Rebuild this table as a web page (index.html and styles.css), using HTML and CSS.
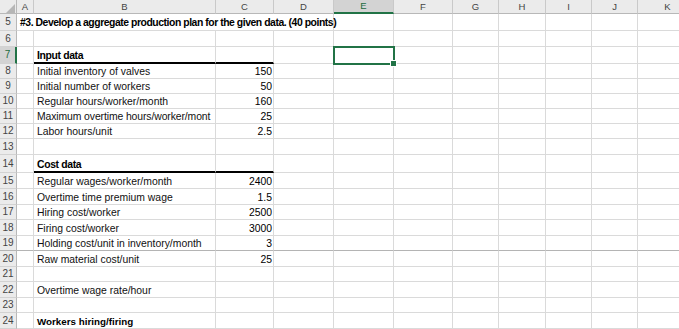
FILE: index.html
```html
<!DOCTYPE html>
<html>
<head>
<meta charset="utf-8">
<link rel="stylesheet" href="styles.css">
</head>
<body>
<table class="sheet">
<colgroup>
<col class="w-hdr"><col class="w-a"><col class="w-b"><col class="w-c"><col class="w-d"><col class="w-e"><col class="w-f"><col class="w-g"><col class="w-h"><col class="w-i"><col class="w-j"><col class="w-k">
</colgroup>
<tr class="colhdr">
<th class="corner"><svg class="tri" width="9" height="9" viewBox="0 0 9 9"><polygon points="9,0 9,9 0,9" fill="#b6b6b6"/></svg></th>
<th>A</th><th>B</th><th>C</th><th>D</th><th class="selhdr">E</th><th>F</th><th>G</th><th>H</th><th>I</th><th>J</th><th>K</th>
</tr>
<tr class="h17"><th class="rn">5</th><td colspan="4" class="title">#3. Develop a aggregate production plan for the given data. (40 points)</td><td></td><td></td><td></td><td></td><td></td><td></td><td></td></tr>
<tr class="h16"><th class="rn">6</th><td></td><td></td><td></td><td></td><td></td><td></td><td></td><td></td><td></td><td></td><td></td></tr>
<tr class="h17"><th class="rn selrow">7</th><td></td><td class="head thick">Input data</td><td class="thick"></td><td></td><td class="sel"></td><td></td><td></td><td></td><td></td><td></td><td></td></tr>
<tr class="h15"><th class="rn">8</th><td></td><td class="lbl">Initial inventory of valves</td><td class="n">150</td><td></td><td></td><td></td><td></td><td></td><td></td><td></td><td></td></tr>
<tr class="h15"><th class="rn">9</th><td></td><td class="lbl">Initial number of workers</td><td class="n">50</td><td></td><td></td><td></td><td></td><td></td><td></td><td></td><td></td></tr>
<tr class="h15"><th class="rn">10</th><td></td><td class="lbl">Regular hours/worker/month</td><td class="n">160</td><td></td><td></td><td></td><td></td><td></td><td></td><td></td><td></td></tr>
<tr class="h15"><th class="rn">11</th><td></td><td class="lbl tight">Maximum overtime hours/worker/mont</td><td class="n">25</td><td></td><td></td><td></td><td></td><td></td><td></td><td></td><td></td></tr>
<tr class="h15"><th class="rn">12</th><td></td><td class="lbl">Labor hours/unit</td><td class="n">2.5</td><td></td><td></td><td></td><td></td><td></td><td></td><td></td><td></td></tr>
<tr class="h16"><th class="rn">13</th><td></td><td></td><td></td><td></td><td></td><td></td><td></td><td></td><td></td><td></td><td></td></tr>
<tr class="h18"><th class="rn">14</th><td></td><td class="head thick">Cost data</td><td class="thick"></td><td></td><td></td><td></td><td></td><td></td><td></td><td></td><td></td></tr>
<tr class="h16"><th class="rn">15</th><td></td><td class="lbl">Regular wages/worker/month</td><td class="n">2400</td><td></td><td></td><td></td><td></td><td></td><td></td><td></td><td></td></tr>
<tr class="h16"><th class="rn">16</th><td></td><td class="lbl">Overtime time premium wage</td><td class="n">1.5</td><td></td><td></td><td></td><td></td><td></td><td></td><td></td><td></td></tr>
<tr class="h15"><th class="rn">17</th><td></td><td class="lbl">Hiring cost/worker</td><td class="n">2500</td><td></td><td></td><td></td><td></td><td></td><td></td><td></td><td></td></tr>
<tr class="h16"><th class="rn">18</th><td></td><td class="lbl">Firing cost/worker</td><td class="n">3000</td><td></td><td></td><td></td><td></td><td></td><td></td><td></td><td></td></tr>
<tr class="h15 brk"><th class="rn">19</th><td></td><td class="lbl">Holding cost/unit in inventory/month</td><td class="n">3</td><td></td><td></td><td></td><td></td><td></td><td></td><td></td><td></td></tr>
<tr class="h16"><th class="rn">20</th><td></td><td class="lbl">Raw material cost/unit</td><td class="n">25</td><td></td><td></td><td></td><td></td><td></td><td></td><td></td><td></td></tr>
<tr class="h15"><th class="rn">21</th><td></td><td></td><td></td><td></td><td></td><td></td><td></td><td></td><td></td><td></td><td></td></tr>
<tr class="h16"><th class="rn">22</th><td></td><td class="lbl">Overtime wage rate/hour</td><td></td><td></td><td></td><td></td><td></td><td></td><td></td><td></td><td></td></tr>
<tr class="h15"><th class="rn">23</th><td></td><td></td><td></td><td></td><td></td><td></td><td></td><td></td><td></td><td></td><td></td></tr>
<tr class="h16"><th class="rn">24</th><td></td><td class="head arial">Workers hiring/firing</td><td></td><td></td><td></td><td></td><td></td><td></td><td></td><td></td><td></td></tr>
</table>
</body>
</html>
```
FILE: styles.css
```css
html, body {
  margin: 0;
  padding: 0;
  background: #ffffff;
  overflow: hidden;
}
body {
  width: 679px;
  height: 329px;
  font-family: "Liberation Sans", Arial, sans-serif;
  font-size: 10.4px;
  color: #000;
}
.sheet {
  table-layout: fixed;
  border-collapse: separate;
  border-spacing: 0;
  width: 698px;
}
.w-hdr { width: 17px; }
.w-a { width: 17px; }
.w-b { width: 182px; }
.w-c { width: 58px; }
.w-d { width: 60px; }
.w-e { width: 60px; }
.w-f { width: 59px; }
.w-g { width: 46px; }
.w-h { width: 47px; }
.w-i { width: 46px; }
.w-j { width: 46px; }
.w-k { width: 60px; }

.sheet td, .sheet th {
  box-sizing: border-box;
  padding: 0 2px 0 3px;
  border-right: 1px solid #dadada;
  border-bottom: 1px solid #dadada;
  white-space: nowrap;
  overflow: hidden;
  vertical-align: bottom;
  line-height: 12px;
  font-weight: normal;
}
.colhdr { height: 14px; }
.h15 { height: 15px; }
.h16 { height: 16px; }
.h17 { height: 17px; }
.h18 { height: 18px; }

.sheet .colhdr th {
  background: #ebebeb;
  color: #444;
  font-size: 9.5px;
  text-align: center;
  vertical-align: middle;
  padding: 0;
  border-right: 1px solid #c9c9c9;
  border-bottom: 1px solid #b8b8b8;
  line-height: 12px;
}
.sheet .colhdr th.corner {
  border-right: 1px solid #b8b8b8;
}
.tri {
  display: block;
  margin: 3px 1px 0 auto;
}
.sheet .colhdr th.selhdr {
  background: #d3d3d3;
  color: #1e6b40;
  border-bottom: 2px solid #217346;
}
.sheet th.rn {
  background: #ebebeb;
  color: #444;
  font-size: 10px;
  text-align: center;
  vertical-align: middle;
  padding: 0;
  border-right: 1px solid #b8b8b8;
  border-bottom: 1px solid #d2d2d2;
}
.sheet th.rn.selrow {
  background: #d3d3d3;
  color: #1e6b40;
  border-right: 2px solid #217346;
}
.sheet .title {
  font-weight: bold;
  letter-spacing: -0.45px;
  overflow: visible;
  padding-bottom: 1px;
}
.sheet .lbl {
  color: #111;
}
.sheet .tight {
  letter-spacing: -0.1px;
  padding-right: 0;
}
.sheet .head {
  font-weight: bold;
  letter-spacing: -0.35px;
}
.sheet .arial {
  font-size: 9.8px;
  letter-spacing: 0;
}
.sheet .thick {
  border-bottom: 2px solid #000;
}
.sheet .n {
  text-align: right;
  padding-right: 1px;
}
.sheet .brk td, .sheet .brk th {
  border-bottom-color: #b4b4b4;
}
.sheet .sel {
  position: relative;
  overflow: visible;
}
.sel::after {
  content: "";
  position: absolute;
  left: -1px;
  top: -1px;
  right: -2px;
  bottom: -2px;
  border: 2px solid #217346;
}
.sel::before {
  content: "";
  position: absolute;
  right: -4px;
  bottom: -4px;
  width: 5px;
  height: 5px;
  background: #217346;
  border: 1px solid #fff;
  z-index: 2;
}
```
